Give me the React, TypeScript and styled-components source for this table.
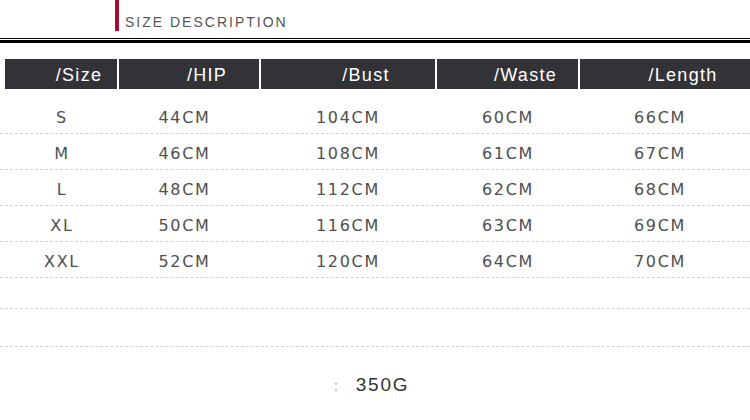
import type { FC } from 'react';
import styled, { createGlobalStyle } from 'styled-components';

const GlobalStyle = createGlobalStyle`
    html, body {
        margin: 0;
        padding: 0;
        background: #fff;
    }

    body {
        width: 750px;
        height: 420px;
        overflow: hidden;
        font-family: 'Liberation Sans', Arial, sans-serif;
    }
`;

const Page = styled.div`
    width: 750px;
    display: flex;
    flex-direction: column;
`;

const TitleBar = styled.div`
    height: 38px;
    display: flex;
    align-items: flex-start;
    padding-left: 115px;
    box-sizing: border-box;
`;

const Accent = styled.div`
    width: 4px;
    height: 31px;
    background: #a50c34;
`;

const Title = styled.h1`
    margin: 14px 0 0 6px;
    font-size: 14px;
    font-weight: normal;
    letter-spacing: 2px;
    color: #555;
    line-height: 16px;
`;

const DoubleRule = styled.div`
    height: 1px;
    border-top: 1px solid #000;
    border-bottom: 3px solid #000;
`;

const Table = styled.div`
    margin-top: 16px;
    display: flex;
    flex-direction: column;
`;

const HeadRow = styled.div`
    display: grid;
    grid-template-columns: 112px 140px 174px 141px 1fr;
    column-gap: 2px;
    padding-left: 5px;
    height: 30px;
`;

const HeadCell = styled.div`
    background: #333237;
    color: #fff;
    font-size: 18px;
    letter-spacing: 1.3px;
    display: flex;
    align-items: center;
    justify-content: center;
    white-space: nowrap;
    padding-top: 2px;
`;

/* placeholder where the erased CJK label used to be */
const Ghost = styled.span`
    display: inline-block;
    width: 36px;
`;

const Body = styled.div`
    margin-top: 9px;
`;

const Row = styled.div<{ $h?: number }>`
    display: grid;
    grid-template-columns: 114px 131px 196px 124px 1fr;
    padding-left: 5px;
    height: ${(p) => p.$h ?? 36}px;
    box-sizing: border-box;
    border-bottom: 1px dashed #d2d2d2;
`;

const Cell = styled.div`
    display: flex;
    align-items: center;
    justify-content: center;
    font-family: 'DejaVu Sans', 'Liberation Sans', sans-serif;
    font-size: 16px;
    letter-spacing: 1.7px;
    color: #4f4f4f;
    padding-top: 4px;
`;

const Weight = styled.div`
    margin-top: 27px;
    padding-left: 334px;
    display: flex;
    align-items: baseline;
    gap: 16px;
    font-size: 19px;
    letter-spacing: 1.8px;
    color: #333;
`;

const Colon = styled.span`
    color: #999;
    font-size: 14px;
`;

const columns = ['Size', 'HIP', 'Bust', 'Waste', 'Length'];

const rows = [
    ['S', '44CM', '104CM', '60CM', '66CM'],
    ['M', '46CM', '108CM', '61CM', '67CM'],
    ['L', '48CM', '112CM', '62CM', '68CM'],
    ['XL', '50CM', '116CM', '63CM', '69CM'],
    ['XXL', '52CM', '120CM', '64CM', '70CM'],
];

const App: FC = () => {
    return (
        <Page>
            <GlobalStyle />
            <TitleBar>
                <Accent />
                <Title>SIZE DESCRIPTION</Title>
            </TitleBar>
            <DoubleRule />
            <Table>
                <HeadRow>
                    {columns.map((c) => (
                        <HeadCell key={c}>
                            <Ghost />/{c}
                        </HeadCell>
                    ))}
                </HeadRow>
                <Body>
                    {rows.map((r) => (
                        <Row key={r[0]}>
                            {r.map((v, i) => (
                                <Cell key={i}>{v}</Cell>
                            ))}
                        </Row>
                    ))}
                    <Row $h={31} />
                    <Row $h={38} />
                </Body>
            </Table>
            <Weight>
                <Colon>:</Colon>
                <span>350G</span>
            </Weight>
        </Page>
    );
};

export default App;
